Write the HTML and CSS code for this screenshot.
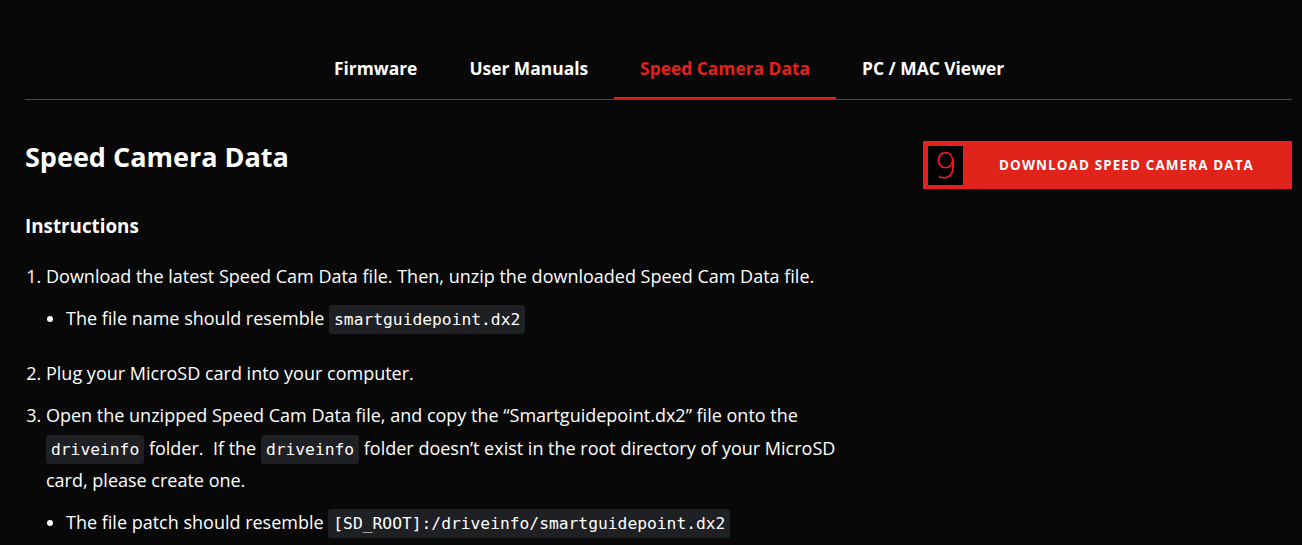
FILE: index.html
```html
<!DOCTYPE html>
<html>
<head>
<meta charset="utf-8">
<link rel="stylesheet" href="styles.css">
</head>
<body>
<div class="page">
  <nav class="tabs">
    <a class="tab">Firmware</a>
    <a class="tab">User Manuals</a>
    <a class="tab active">Speed Camera Data</a>
    <a class="tab">PC / MAC Viewer</a>
  </nav>
  <div class="content">
    <div class="main">
      <h1 class="title">Speed Camera Data</h1>
      <h2 class="subtitle">Instructions</h2>
      <ol class="steps">
        <li>Download the latest Speed Cam Data file. Then, unzip the downloaded Speed Cam Data file.
          <ul class="sub"><li>The file name should resemble <code>smartguidepoint.dx2</code></li></ul>
        </li>
        <li>Plug your MicroSD card into your computer.</li>
        <li>Open the unzipped Speed Cam Data file, and copy the “Smartguidepoint.dx2” file onto the <code>driveinfo</code> folder.&nbsp; If the <code>driveinfo</code> folder doesn’t exist in the root directory of your MicroSD card, please create one.
          <ul class="sub"><li>The file patch should resemble <code>[SD_ROOT]:/driveinfo/smartguidepoint.dx2</code></li></ul>
        </li>
      </ol>
    </div>
    <aside class="side">
      <a class="btn"><span class="marker">9</span><span class="btn-label">DOWNLOAD SPEED CAMERA DATA</span></a>
    </aside>
  </div>
</div>
</body>
</html>
```
FILE: styles.css
```css
html, body {
  margin: 0;
  padding: 0;
  background: #080808;
  color: #ffffff;
  font-family: "Open Sans", "Noto Sans", sans-serif;
}
.page {
  padding: 0 10px 0 25px;
}
.tabs {
  display: flex;
  padding-left: 283px;
  padding-top: 56px;
  border-bottom: 1px solid #4a4a4a;
}
.tab {
  display: block;
  padding: 0 26px 17px;
  font-size: 17.4px;
  font-weight: 700;
  line-height: 24px;
  color: #ffffff;
  border-bottom: 2px solid transparent;
}
.tab.active {
  color: #e3201b;
  border-bottom-color: #d9201c;
}
.content {
  display: flex;
  justify-content: space-between;
  padding-top: 40px;
}
.main {
  width: 840px;
}
.title {
  margin: 0;
  font-size: 27px;
  line-height: 34px;
  font-weight: 700;
}
.subtitle {
  margin: 39px 0 0;
  font-size: 18.8px;
  line-height: 26px;
  font-weight: 700;
}
.steps {
  margin: 21px 0 0;
  padding-left: 21px;
  font-size: 18px;
  line-height: 32.5px;
}
.steps > li {
  margin-bottom: 10px;
  padding-left: 0;
}
.sub {
  margin: 9px 0 23px;
  padding-left: 20px;
  list-style: disc;
}
.sub li {
  line-height: 32px;
}
code {
  font-family: "DejaVu Sans Mono", monospace;
  font-size: 16.3px;
  line-height: 20px;
  background: #1f2023;
  border-radius: 3px;
  padding: 5px 5px;
}
.side {
  padding-top: 1px;
}
.btn {
  display: flex;
  align-items: center;
  width: 365px;
  height: 44px;
  background: #e0241b;
  border: 2px solid #ed1d24;
}
.marker {
  width: 35px;
  height: 39px;
  margin-left: 3px;
  background: #000000;
  color: #ed1d24;
  font-size: 36px;
  line-height: 39px;
  text-align: center;
  font-family: "DejaVu Sans", sans-serif;
  font-weight: 300;
}
.btn-label {
  flex: 1;
  text-align: center;
  font-size: 13.4px;
  font-weight: 700;
  letter-spacing: 1.15px;
  color: #ffffff;
}
```
